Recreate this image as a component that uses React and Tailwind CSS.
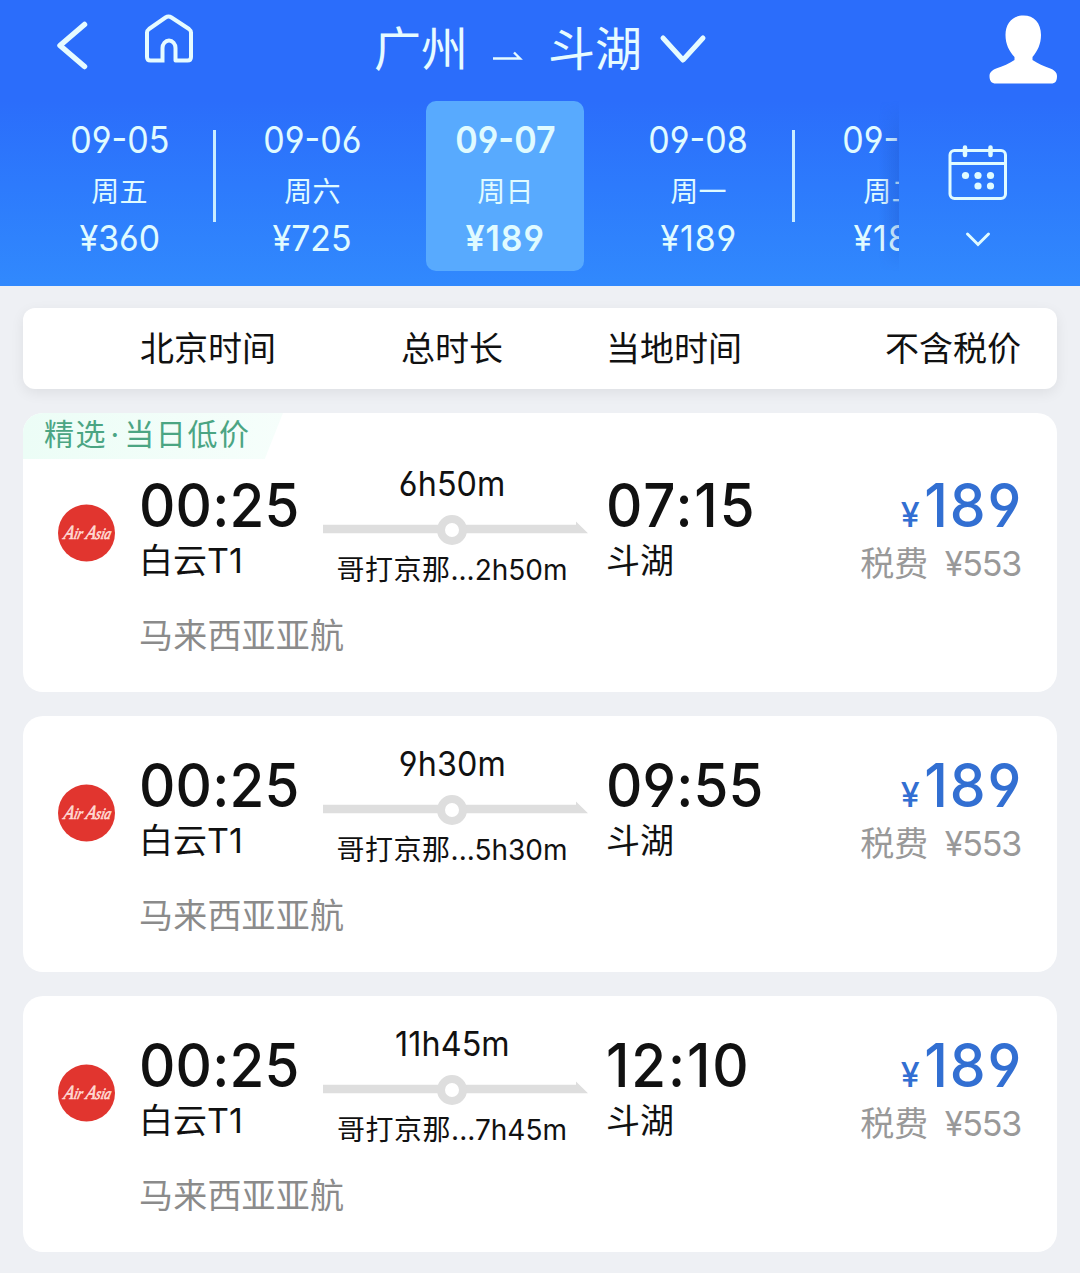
const DATES = [
  { date: '09-05', day: '周五', price: 360, divider: true },
  { date: '09-06', day: '周六', price: 725 },
  { date: '09-07', day: '周日', price: 189, active: true },
  { date: '09-08', day: '周一', price: 189, divider: true },
  { date: '09-09', day: '周二', price: 189 },
]

const FLIGHTS = [
  { depart: '00:25', arrive: '07:15', duration: '6h50m', stop: '2h50m', tag: ['精选', '当日低价'] },
  { depart: '00:25', arrive: '09:55', duration: '9h30m', stop: '5h30m' },
  { depart: '00:25', arrive: '12:10', duration: '11h45m', stop: '7h45m' },
]

export default function App() {
  return (
    <div className="min-h-[1273px] w-[1080px] overflow-hidden bg-[#eef0f4] font-['Inter','Noto_Sans_CJK_SC',sans-serif] text-[#111] [font-feature-settings:'cv03','cv04']">
      <header className="h-[286px] bg-linear-to-b from-[#2b6dfb] from-35% to-[#3189fd]">
        <TitleBar />
        <DateStrip />
      </header>
      <main className="flex flex-col gap-6 px-[23px] pt-[22px]">
        <ColumnHeads />
        {FLIGHTS.map((f) => (
          <FlightCard key={f.arrive} flight={f} />
        ))}
      </main>
    </div>
  )
}

function TitleBar() {
  return (
    <div className="flex h-[101px] items-start text-[#e6fbff]">
      <svg className="mt-5 ml-[55px] h-[52px] w-9" viewBox="0 0 36 52" fill="none" stroke="currentColor" strokeWidth="5.5" strokeLinecap="round" strokeLinejoin="round">
        <path d="M29.500 4.500 L5 25.500 L29.500 46.500" />
      </svg>
      <svg className="mt-3 ml-[52px] h-[52px] w-[52px]" viewBox="0 0 52 52" fill="none" stroke="currentColor" strokeWidth="4" strokeLinejoin="round">
        <path d="M19.500 50.500 V36 A6.500 7.500 0 0 1 32.500 36 V48.500 H44.500 Q48 48.500 48 45 V20.500 Q48 18.500 46 17 L28.500 5.500 Q25.500 3.500 22.500 5.500 L6 17 Q4 18.500 4 20.500 V45 Q4 48.500 7.500 48.500 H19.500" />
      </svg>
      <h1 className="mt-4 ml-[179px] flex items-center text-[47px] leading-[66px] font-normal">
        <span className="w-[95px]">广州</span>
        <svg className="mt-3.5 ml-[23px] h-3 w-8" viewBox="0 0 32 12" fill="none" stroke="currentColor" strokeWidth="2.4">
          <path d="M1 8.500 H28 L22 2.500" />
        </svg>
        <span className="ml-6 w-[95px]">斗湖</span>
        <svg className="ml-4 h-[30px] w-12" viewBox="0 0 48 30" fill="none" stroke="currentColor" strokeWidth="5" strokeLinecap="round" strokeLinejoin="round">
          <path d="M4 4 L24 26 L44 4" />
        </svg>
      </h1>
      <svg className="mt-[15px] mr-[22px] ml-auto h-[69px] w-[70px] text-white" viewBox="0 0 70 69" fill="currentColor">
        <path d="M35.500 0.500 C46 0.500 53 8 53 20 C53 29 49.500 36 44.500 42 V45 C50 48.500 56 51.500 61 53 C66.500 55 69 57.500 69 61 C69 66 67.500 68.500 63 68.500 H8 C3.500 68.500 1.500 66 1.500 61 C1.500 57.500 4 55 9.500 53 C15 51.500 21 48.500 26.500 45 V42 C21 36 17.500 29 17.500 20 C17.500 8 25 0.500 35.500 0.500 Z" />
      </svg>
    </div>
  )
}

function DateStrip() {
  return (
    <div className="flex text-[#e0fbff]">
      <div className="flex w-[899px] overflow-hidden pl-[22px]">
        {DATES.map((d) => (
          <DateCell key={d.date} item={d} />
        ))}
        <div className="sticky right-0 w-5 shrink-0 bg-linear-to-r from-transparent to-[#1f55c8]/35 [mask-image:linear-gradient(transparent,black_30%,black_70%,transparent)]" />
      </div>
      <div className="flex flex-1 flex-col items-center pt-[43px] pr-6">
        <svg className="h-14 w-[60px]" viewBox="0 0 60 56" fill="none" stroke="currentColor" strokeWidth="3">
          <rect x="2" y="6.500" width="55.500" height="48" rx="4.500" />
          <path d="M2 19.500 H57.500" />
          <path d="M17 3.500 V11 M42.500 3.500 V11" strokeWidth="4.500" strokeLinecap="round" />
          <g fill="currentColor" stroke="none">
            <circle cx="17.500" cy="31.500" r="3.600" />
            <circle cx="30" cy="31.500" r="3.600" />
            <circle cx="42.500" cy="31.500" r="3.600" />
            <circle cx="30" cy="42" r="3.600" />
            <circle cx="42.500" cy="42" r="3.600" />
          </g>
        </svg>
        <svg className="mt-[30px] h-[18px] w-7" viewBox="0 0 28 18" fill="none" stroke="currentColor" strokeWidth="3" strokeLinecap="round">
          <path d="M3.500 4 L14 14.500 L24.500 4" />
        </svg>
      </div>
    </div>
  )
}

function DateCell({ item }) {
  return (
    <>
      <div className="flex w-[193px] shrink-0 justify-center">
        <div
          className={`flex h-[170px] w-[158px] flex-col items-center rounded-[10px] pt-[17px] pl-0.5 whitespace-nowrap ${
            item.active ? 'bg-[#58aafe] font-semibold' : ''
          }`}
        >
          <span className="scale-x-92 text-[37px] leading-[44px]">{item.date}</span>
          <span className="mt-2 text-[28px] leading-[44px] font-normal tracking-[0.2px]">{item.day}</span>
          <span className={`mt-0.5 scale-x-94 text-[36px] leading-[44px] ${item.price === 189 ? 'tracking-[1px]' : ''}`}>
            ¥{item.price}
          </span>
        </div>
      </div>
      {item.divider && <div className="mt-[29px] -mr-px -ml-0.5 h-[92px] w-[3px] shrink-0 bg-[#c9ecff]" />}
    </>
  )
}

function ColumnHeads() {
  return (
    <div className="flex h-[81px] rounded-xl bg-white pr-9 pl-[117px] text-[34px] leading-[81px] shadow-[0_4px_14px_rgba(0,0,0,0.07)]">
      <span className="w-[261px]">北京时间</span>
      <span className="w-[205px]">总时长</span>
      <span>当地时间</span>
      <span className="ml-auto">不含税价</span>
    </div>
  )
}

function FlightCard({ flight }) {
  return (
    <section className={`overflow-hidden rounded-[20px] bg-white ${flight.tag ? '' : 'pt-[23px]'}`}>
      {flight.tag && (
        <div className="h-[46px] w-[260px] bg-linear-to-r from-[#ecfdf6] to-[#f6fefb] pl-[21px] text-[30px] leading-[43px] tracking-[1.6px] whitespace-nowrap text-[#4ba583] [clip-path:polygon(0_0,100%_0,93%_100%,0_100%)]">
          {flight.tag[0]}
          <span className="inline-block w-[17px] text-center">·</span>
          {flight.tag[1]}
        </div>
      )}
      <div className="flex h-[233px] pr-9 pl-[34px] whitespace-nowrap">
        <AirlineLogo />
        <div className="ml-[22px] w-[183px] pt-4">
          <Time value={flight.depart} />
          <div className="mt-1 text-[34px] leading-[44px]">白云T1</div>
          <div className="mt-[31px] text-[34px] leading-[44px] tracking-[0.2px] text-[#8b8b8b]">马来西亚亚航</div>
        </div>
        <div className="flex w-[266px] flex-col items-center pt-[3px]">
          <div className="-ml-1.5 scale-x-95 text-[34px] leading-[44px] tracking-[0.1px]">{flight.duration}</div>
          <RouteLine />
          <div className="mt-0.5 -ml-1.5 text-[28px] leading-[44px]">
            <span className="tracking-[0.5px]">哥打京那</span>...{flight.stop}
          </div>
        </div>
        <div className="ml-[18px] pt-4">
          <Time value={flight.arrive} />
          <div className="mt-1 text-[34px] leading-[44px]">斗湖</div>
        </div>
        <div className="ml-auto pt-4 text-right">
          <div className="text-[60px] leading-[60px] font-medium text-[#326fd2]">
            <span className="-mr-px text-[34px] leading-none">¥</span>
            <span className="-mr-[2px] inline-block origin-right scale-x-95 tracking-[2px]">189</span>
          </div>
          <div className="mt-[7px] text-[34px] leading-[44px] text-[#999]">
            税费 <span className="ml-[7px] tracking-[-1.2px]">¥553</span>
          </div>
        </div>
      </div>
    </section>
  )
}

function Time({ value }) {
  return (
    <div
      className={`w-fit origin-left scale-x-94 text-[60px] leading-[60px] font-medium ${
        value.includes('1') ? 'tracking-[2px]' : 'tracking-[0.2px]'
      }`}
    >
      {value}
    </div>
  )
}

function RouteLine() {
  return (
    <svg className="mt-2 h-8 w-[266px] shrink-0" viewBox="0 0 266 32">
      <path d="M1 10.700 H254 V7.500 L266 19.300 H1 Z" fill="#dedede" />
      <circle cx="130" cy="16" r="11" fill="#fff" stroke="#dedede" strokeWidth="8" />
    </svg>
  )
}

function AirlineLogo() {
  return (
    <svg className="mt-[44px] h-[60px] w-[60px] shrink-0" viewBox="0 0 60 60">
      <circle cx="29.500" cy="30" r="28.500" fill="#e1352f" />
      {/* brush script wordmark */}
      <text
        x="6"
        y="36"
        transform="translate(9 0) skewX(-14)"
        fill="#ffd9d3"
        stroke="#ffd9d3"
        strokeWidth="0.7"
        fontFamily="Liberation Serif, serif"
        fontStyle="italic"
        fontSize="16"
        textLength="47"
        lengthAdjust="spacingAndGlyphs"
      >
        <tspan fontSize="20">A</tspan>ir <tspan fontSize="20">A</tspan>sia
      </text>
    </svg>
  )
}
